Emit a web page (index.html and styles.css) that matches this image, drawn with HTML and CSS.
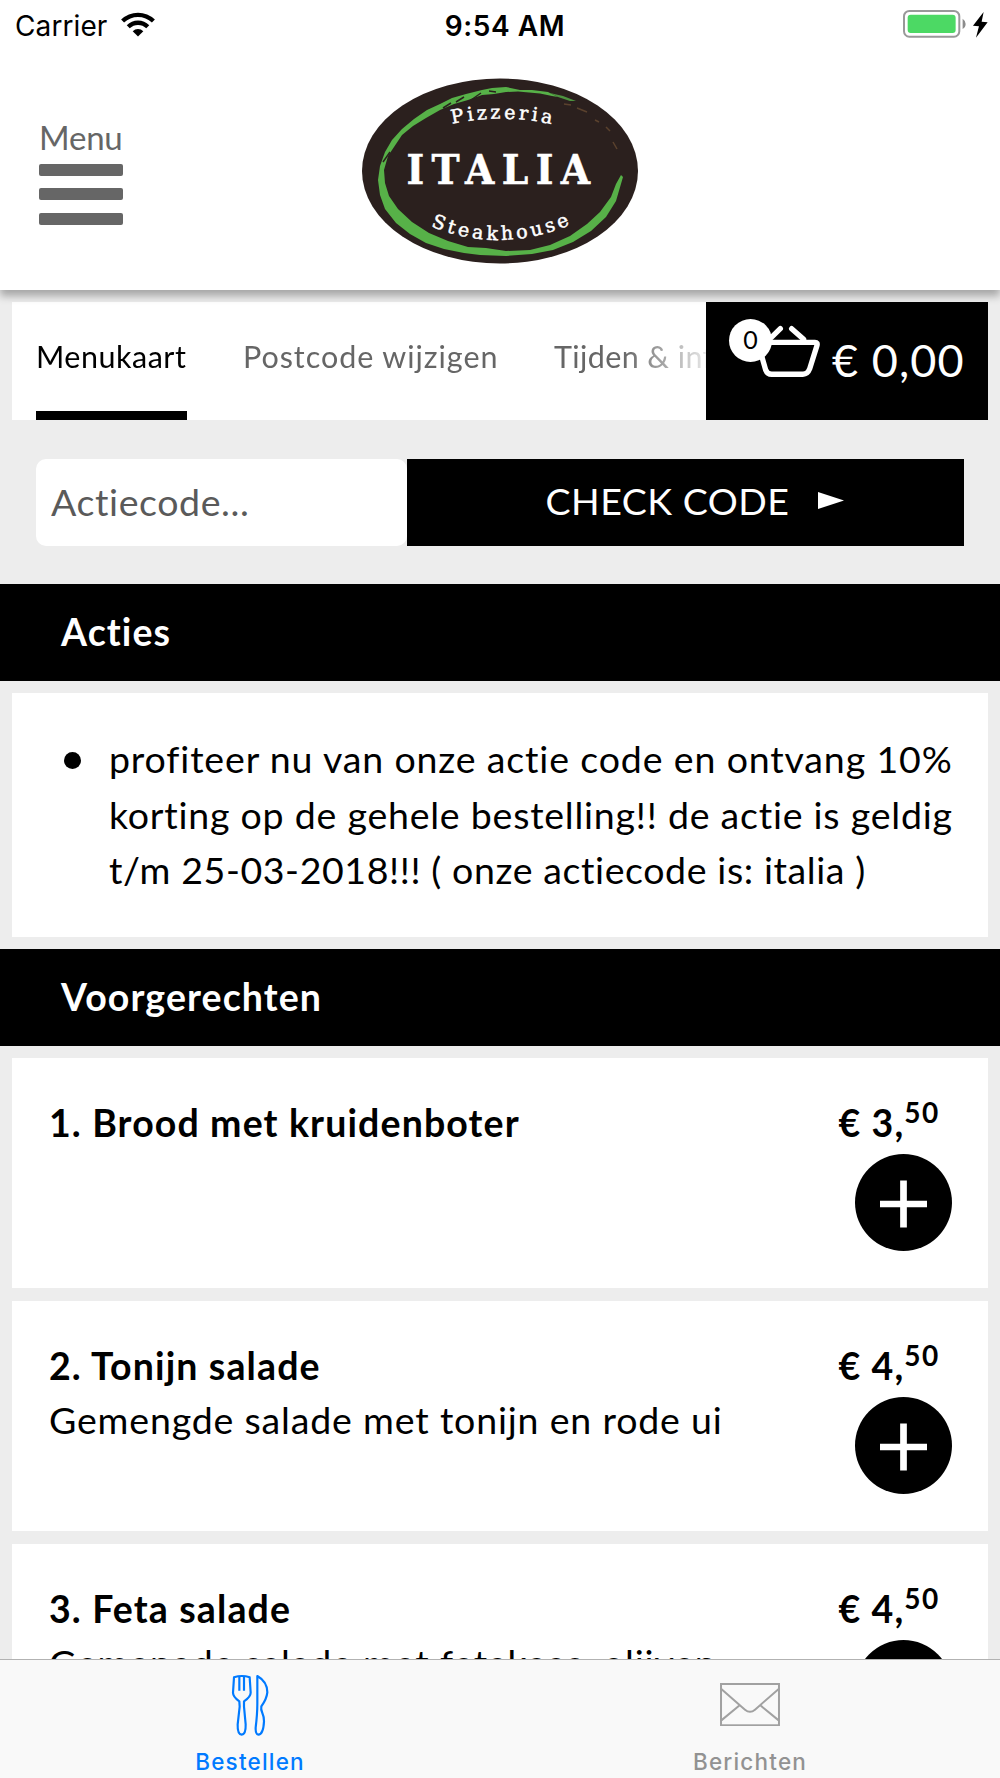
FILE: index.html
```
<!DOCTYPE html>
<html lang="nl">
<head>
    <meta charset="UTF-8">
    <meta name="viewport" content="width=device-width, initial-scale=1.0">
    <title>Pizzeria Italia</title>
    <link rel="stylesheet" href="styles.css">
</head>
<body>

    <header class="header">
        <div class="statusbar">
            <div class="carrier">
                <span>Carrier</span>
                <svg class="wifi" viewBox="0 0 102 74">
                    <path d="M51 74 L35 58 A23 23 0 0 1 67 58 Z"/>
                    <path d="M17 40 A48 48 0 0 1 85 40 L76 49 A36 36 0 0 0 26 49 Z"/>
                    <path d="M0 23 A73 73 0 0 1 102 23 L93 32 A60 60 0 0 0 9 32 Z"/>
                </svg>
            </div>
            <div class="tijd">9:54 AM</div>
            <div class="batterij">
                <svg viewBox="0 0 256 84">
                    <rect x="3" y="3" width="166" height="77" rx="16" fill="none" stroke="#999" stroke-width="6"/>
                    <rect x="14" y="14" width="144" height="55" rx="9" fill="#4cd964"/>
                    <path d="M179 26 Q188 32 188 42 T179 57 Z" fill="#8c8c8c"/>
                    <path d="M242 6 L210 47 L228 49 L219 83 L254 37 L236 35 Z"/>
                </svg>
            </div>
        </div>

        <div class="kop">
            <div class="menu">
                <span>Menu</span>
                <i></i>
                <i></i>
                <i></i>
            </div>
            <svg class="logo" viewBox="0 0 280 190">
                <defs>
                    <path id="boog-boven" d="M91 48 Q142 37 196 49"/>
                    <path id="boog-onder" d="M68 149 Q140 180 214 147"/>
                </defs>
                <ellipse cx="140" cy="95" rx="138" ry="92.5" fill="#2b201e"/>
                <g fill="#57b148">
                    <path d="M188 16 L172 14 L160 14 L146 11 L132 12 L122 14 L106 18 L92 22 L80 28 L67 34 L54 43 L42 53 L32 64 L25 76 L20 90 L18 104 L20 119 L25 133 L36 147 L50 158 L66 167 L84 173 L104 177 L120 179 L146 180 L172 178 L193 174 L213 166 L231 155 L246 141 L256 125 L263 101 L261 99 L256 108 L251 121 L240 136 L227 148 L210 160 L190 169 L170 174 L146 175 L126 172 L108 171 L88 165 L69 157 L52 146 L38 133 L29 120 L25 107 L24 94 L28 80 L36 68 L42 59 L53 50 L66 42 L80 34 L94 28 L108 24 L122 19 L134 18 L146 16 L158 15.5 L180 17.5 L192 20 L198 21 Z"/>
                    <path d="M190 17 L203 20 L216 25 L210 25 L198 21 Z" opacity=".8"/>
                </g>
                <path d="M96 26 L104 21 M111 24 L121 17 M83 32 L91 27 M129 15 L136 16 M23 86 L30 76" stroke="#2b201e" stroke-width="1.5"/>
                <path d="M204 28 L211 29 M217 32 L227 36 M235 44 L239 46 M246 51 L250 55 M253 66 L257 73" stroke="#6f5034" stroke-width="1.5" opacity=".7"/>
                <g fill="#fff" stroke="#fff" stroke-width=".5" font-family="DejaVu Serif, serif">
                    <text font-size="19"><textPath href="#boog-boven" startOffset="1" textLength="101">Pizzeria</textPath></text>
                    <text x="46.5" y="107.5" font-size="41" font-weight="bold" textLength="191" lengthAdjust="spacingAndGlyphs" letter-spacing="8">ITALIA</text>
                    <text font-size="19"><textPath href="#boog-onder" startOffset="3" textLength="144">Steakhouse</textPath></text>
                </g>
            </svg>
        </div>
    </header>

    <main class="inhoud">
        <nav class="balk">
            <div class="tabs">
                <a class="tab actief">Menukaart</a>
                <a class="tab postcode">Postcode wijzigen</a>
                <a class="tab tijden">Tijden &amp; info</a>
            </div>
            <div class="mandje">
                <div class="mandje-icoon">
                    <svg viewBox="0 0 190 158" fill="none" stroke="#fff" stroke-width="16" stroke-linecap="round" stroke-linejoin="round">
                        <path d="M12 52 H171 Q180 52 177 62 L155 132 Q149 148 135 148 H41 Q28 148 23 135 L2 62"/>
                        <path d="M67 11 L34 43 M101 11 L137 43"/>
                    </svg>
                    <span class="aantal">0</span>
                </div>
                <span class="totaal">€ 0,00</span>
            </div>
        </nav>

        <form class="actiecode">
            <input type="text" placeholder="Actiecode...">
            <button type="button">CHECK CODE
                <svg viewBox="0 0 26 17"><path d="M0 0 L26 8.5 L0 17 Z" fill="#fff"/></svg>
            </button>
        </form>

        <h2>Acties</h2>
        <ul class="kaart acties">
            <li>
                <span>profiteer nu van onze actie code en ontvang 10%</span>
                <span class="midden">korting op de gehele bestelling!! de actie is geldig</span>
                <span class="smal">t/m 25-03-2018!!! ( onze actiecode is: italia )</span>
            </li>
        </ul>

        <h2>Voorgerechten</h2>
        <div class="kaart gerecht">
            <div class="tekst">
                <h3>1. Brood met kruidenboter</h3>
            </div>
            <div class="prijs">
                <b>€ 3,<sup>50</sup></b>
                <svg class="plus" viewBox="0 0 97 97"><circle cx="48.5" cy="48.5" r="48.5"/><path d="M25 50 H72 M48.5 26.5 V73.5" stroke="#fff" stroke-width="6.7"/></svg>
            </div>
        </div>
        <div class="kaart gerecht">
            <div class="tekst">
                <h3>2. Tonijn salade</h3>
                <p>Gemengde salade met tonijn en rode ui</p>
            </div>
            <div class="prijs">
                <b>€ 4,<sup>50</sup></b>
                <svg class="plus" viewBox="0 0 97 97"><circle cx="48.5" cy="48.5" r="48.5"/><path d="M25 50 H72 M48.5 26.5 V73.5" stroke="#fff" stroke-width="6.7"/></svg>
            </div>
        </div>
        <div class="kaart gerecht">
            <div class="tekst">
                <h3>3. Feta salade</h3>
                <p>Gemengde salade met fetakaas, olijven</p>
            </div>
            <div class="prijs">
                <b>€ 4,<sup>50</sup></b>
                <svg class="plus" viewBox="0 0 97 97"><circle cx="48.5" cy="48.5" r="48.5"/><path d="M25 50 H72 M48.5 26.5 V73.5" stroke="#fff" stroke-width="6.7"/></svg>
            </div>
        </div>
    </main>

    <footer class="tabbar">
        <div class="knop blauw">
            <!-- vork en mes -->
            <svg class="bestek" viewBox="240 98 120 194" fill="none" stroke="#007aff" stroke-width="6.5" stroke-linejoin="round">
                <path d="M252 111 Q276 103 299 111 L302 157 Q302 169 282 183 L282 199 L287 252 Q288 282 275 283 Q262 282 263 252 L269 199 L268 183 Q249 169 249 157 Z"/>
                <path d="M268 110 V151 M282 110 V151"/>
                <path d="M322 107 Q352 124 352 156 Q350 176 334 198 Q332 207 337 218 Q342 229 342 243 Q340 282 325 283 Q316 282 317 262 Q322 220 322 190 Z"/>
            </svg>
            <span>Bestellen</span>
        </div>
        <div class="knop">
            <svg class="envelop" viewBox="0 0 180 130" fill="none" stroke="#a1a1a1" stroke-width="6">
                <rect x="3" y="3" width="174" height="124"/>
                <path d="M3 17 L75 80 Q90 93 105 80 L177 17 M3 113 L59 67 M177 113 L121 67"/>
            </svg>
            <span>Berichten</span>
        </div>
    </footer>

</body>
</html>
```
FILE: styles.css
```
* {
    box-sizing: border-box;
}

body {
    margin: 0;
    height: 1778px;
    display: flex;
    flex-direction: column;
    overflow: hidden;
    background-color: #ededed;
    color: #000;
    font-family: Lato, sans-serif;
    font-size: 37.5px;
    line-height: 55.5px;
    letter-spacing: 0.82px;
}

svg {
    display: block;
    flex: none;
}

h2, h3, p, ul {
    margin: 0;
    padding: 0;
}

/* Header */
.header {
    height: 290px;
    flex: none;
    background-color: #fff;
    box-shadow: 0 6px 8px rgba(0, 0, 0, 0.3);
    z-index: 1;
}

.statusbar {
    display: grid;
    grid-template-columns: 1fr auto 1fr;
    height: 50px;
    padding: 0 12px 0 15px;
    font-family: Inter, sans-serif;
    font-size: 28px;
    line-height: 52px;
    letter-spacing: 0.1px;
}

.carrier {
    display: flex;
    gap: 14px;
}

.wifi {
    width: 34px;
    height: 24.5px;
    margin-top: 12px;
}

.tijd {
    font-weight: 600;
    letter-spacing: 0.6px;
    padding-left: 7px;
}

.batterij {
    justify-self: end;
    padding-top: 10px;
}

.batterij svg {
    width: 85.3px;
    height: 28px;
}

.kop {
    display: flex;
    padding: 26px 39px 0;
}

.menu {
    width: 321px;
    padding-top: 41px;
    color: #666;
    font-size: 33px;
    line-height: 40px;
    letter-spacing: -0.2px;
}

.menu span {
    display: block;
    margin-bottom: 7px;
}

.menu i {
    display: block;
    width: 84px;
    height: 12px;
    margin-bottom: 12.3px;
    border-radius: 2px;
    background-color: #666;
}

.logo {
    width: 280px;
    height: 190px;
}

/* Inhoud */
.inhoud {
    flex: 1;
    min-height: 0;
    overflow: hidden;
    padding-top: 12px;
}

.balk {
    display: flex;
    height: 118.4px;
    margin: 0 12px;
    background-color: #fff;
}

.tabs {
    display: flex;
    gap: 56px;
    width: 694px;
    padding-left: 24px;
    overflow: hidden;
    -webkit-mask-image: linear-gradient(to right, #000 610px, transparent 710px);
    mask-image: linear-gradient(to right, #000 610px, transparent 710px);
}

.tab {
    flex: none;
    padding-top: 34px;
    color: #666;
    font-size: 30.5px;
    line-height: 40px;
    letter-spacing: 0.95px;
    white-space: nowrap;
}

.actief {
    width: 151px;
    color: #000;
    letter-spacing: 0.5px;
    border-bottom: 9.6px solid #000;
}

.postcode {
    width: 255px;
}

.tijden {
    letter-spacing: 0.4px;
}

.mandje {
    display: flex;
    width: 282px;
    padding: 16px 0 0 22px;
    background-color: #000;
    color: #fff;
}

.mandje-icoon {
    position: relative;
    width: 104px;
    padding: 7px 0 0 30px;
}

.mandje-icoon svg {
    width: 63.3px;
    height: 52.6px;
}

.aantal {
    position: absolute;
    left: 1px;
    top: 1px;
    width: 43px;
    height: 43px;
    border-radius: 50%;
    background-color: #fff;
    color: #000;
    font-size: 25px;
    line-height: 41px;
    letter-spacing: 0;
    text-align: center;
}

.totaal {
    font-size: 45px;
    line-height: 84px;
    letter-spacing: 1.1px;
    white-space: nowrap;
}

.actiecode {
    display: flex;
    height: 87px;
    margin: 38.6px 36px 38.4px;
}

.actiecode input {
    width: 371px;
    padding: 0 15px 1px;
    border: none;
    border-radius: 10px;
    outline: none;
    font: inherit;
    letter-spacing: 0.6px;
}

.actiecode input::placeholder {
    color: #5a5a5a;
}

.actiecode button {
    flex: 1;
    display: flex;
    align-items: center;
    justify-content: center;
    gap: 29px;
    padding: 0 0 3px 19px;
    border: none;
    background-color: #000;
    color: #fff;
    font: inherit;
    letter-spacing: 0.5px;
}

.actiecode button svg {
    width: 26px;
    height: 17px;
}

h2 {
    height: 97px;
    padding-left: 61px;
    background-color: #000;
    color: #fff;
    font-size: 37.5px;
    line-height: 95px;
    letter-spacing: 1.1px;
}

.kaart {
    margin: 12px 12px 13px;
    background-color: #fff;
}

.acties {
    height: 244px;
    margin-bottom: 12px;
    padding: 38px 0 0 97px;
    list-style: none;
}

.acties li {
    position: relative;
}

.acties li::before {
    content: "";
    position: absolute;
    left: -45px;
    top: 21px;
    width: 17px;
    height: 17px;
    border-radius: 50%;
    background-color: #000;
}

.acties span {
    display: block;
    letter-spacing: 0.85px;
    white-space: nowrap;
}

.acties .midden {
    letter-spacing: 0.77px;
}

.acties .smal {
    letter-spacing: 0.6px;
}

/* Gerechten */
.gerecht {
    display: flex;
    justify-content: space-between;
    height: 230px;
    padding: 37px 36.5px 0 37px;
}

.gerecht h3 {
    font-size: 37.5px;
    letter-spacing: 1.12px;
}

.gerecht p {
    margin-top: -1.5px;
}

.prijs {
    width: 113px;
}

.prijs b {
    display: block;
    height: 59px;
    letter-spacing: 1.1px;
    white-space: nowrap;
}

.prijs sup {
    font-size: 28px;
    line-height: 0;
    vertical-align: 14.5px;
    letter-spacing: 1.4px;
}

.plus {
    width: 97px;
    height: 97px;
    margin-left: auto;
}

/* Tabbar */
.tabbar {
    display: flex;
    flex: none;
    height: 119px;
    border-top: 1px solid #b2b2b2;
    background-color: #f9f9f9;
    z-index: 1;
}

.knop {
    flex: 1;
    display: flex;
    flex-direction: column;
    align-items: center;
    justify-content: space-between;
    padding: 13px 0 2px;
    color: #929292;
    font-family: Inter, sans-serif;
    font-size: 22.5px;
    font-weight: 500;
    line-height: 28px;
    letter-spacing: 1.2px;
}

.blauw {
    color: #007aff;
}

.bestek {
    width: 40px;
    height: 64.7px;
}

.envelop {
    width: 60px;
    height: 43.3px;
    margin-top: 10px;
}
```
